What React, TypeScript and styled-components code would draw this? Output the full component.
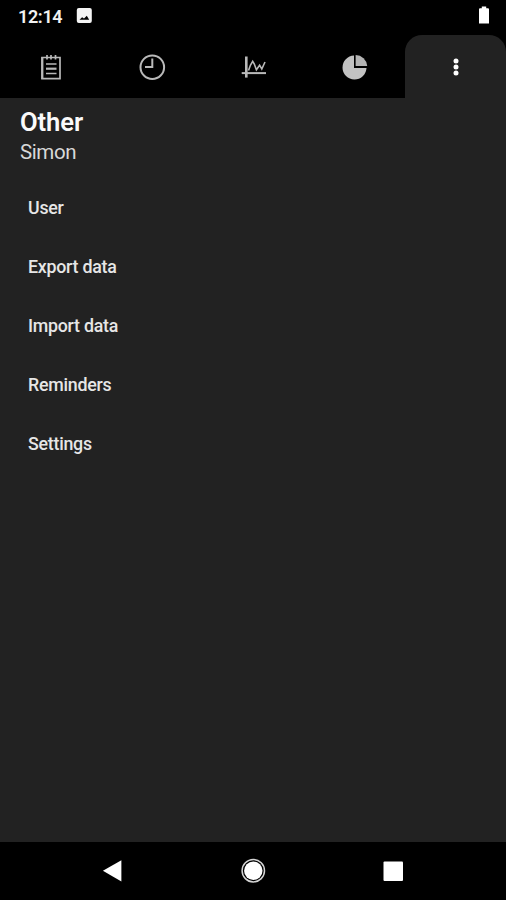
import React from "react";
import styled, { createGlobalStyle } from "styled-components";

const GlobalStyle = createGlobalStyle`
  * { box-sizing: border-box; }
  body { margin: 0; background: #000; }
`;

const Screen = styled.div`
  display: flex;
  flex-direction: column;
  width: 506px;
  height: 900px;
  overflow: hidden;
  background: #000;
  color: #fff;
  font-family: Roboto, sans-serif;
`;

const StatusBar = styled.header`
  display: flex;
  align-items: flex-start;
  height: 35px;
  padding: 6px 14px 0 18px;
`;

const Clock = styled.span`
  width: 58px;
  font-size: 18px;
  font-weight: 600;
  letter-spacing: -0.35px;
  line-height: 21px;
  color: #f2f2f2;
`;

const StatusIcon = styled.svg<{ $end?: boolean }>`
  display: block;
  flex: none;
  margin-left: ${(p) => (p.$end ? "auto" : "0")};
`;

const TabBar = styled.nav`
  display: grid;
  grid-template-columns: 101px 101px 102px 101px 101px;
  height: 63px;
`;

const Tab = styled.button<{ $active?: boolean }>`
  padding: 16px 0 14px 34px;
  border: 0;
  border-radius: 17px 17px 0 0;
  background: ${(p) => (p.$active ? "#222" : "#000")};
  color: ${(p) => (p.$active ? "#fff" : "#b9b9b9")};
  text-align: left;
`;

const TabIcon = styled.svg`
  display: block;
  width: 33px;
  height: 33px;
`;

const Content = styled.main`
  flex: 1;
  padding: 8px 20px 0;
  background: #222;
`;

const Title = styled.h1`
  margin: 0;
  font-size: 25.6px;
  font-weight: 600;
  letter-spacing: -0.1px;
  line-height: 32px;
  color: #fafafa;
`;

const UserName = styled.p`
  margin: 0;
  font-size: 20.5px;
  letter-spacing: -0.4px;
  line-height: 28px;
  color: #d8d8d8;
`;

const Menu = styled.ul`
  margin: 12px 0 0;
  padding: 0;
  list-style: none;
`;

const MenuItem = styled.li`
  display: flex;
  align-items: center;
  height: 59px;
  padding-left: 8px;
  font-size: 17.8px;
  font-weight: 500;
  letter-spacing: -0.25px;
  color: #e6e6e6;
`;

const NavBar = styled.footer`
  display: grid;
  grid-template-columns: 183px 140px 140px;
  justify-items: center;
  height: 58px;
  padding-top: 12px;
`;

const NavButton = styled.button<{ $first?: boolean }>`
  width: 34px;
  height: 34px;
  margin-left: ${(p) => (p.$first ? "42px" : "0")};
  padding: 0;
  border: 0;
  background: none;
  color: #fff;

  svg { display: block; }
`;

const items = ["User", "Export data", "Import data", "Reminders", "Settings"];

export default function App() {
  return (
    <Screen>
      <GlobalStyle />
      <StatusBar>
        <Clock>12:14</Clock>
        <StatusIcon width="18" height="20" viewBox="0 0 18 20">
          <rect x="0.8" y="2" width="15" height="15" rx="2" fill="#f4f4f4" />
          <path d="M3.5 13.8 6.1 11.2 8 12.6 10.8 9.8 13.2 13.8Z" fill="#000" />
        </StatusIcon>
        <StatusIcon $end width="14" height="20" viewBox="0 0 14 20">
          <path d="M1 3.2Q1 2.2 2 2.2H3.8V.6H8.2V2.2H10Q11 2.2 11 3.2V17.6H1Z" fill="#fff" />
        </StatusIcon>
      </StatusBar>
      <TabBar>
        <Tab aria-label="Log">
          <TabIcon viewBox="0 0 33 33" fill="none" stroke="currentColor">
            <path d="M8 6.5H26V27.6H8Z" strokeWidth="1.7" />
            <path d="M8.4 6V28" strokeWidth="2" />
            <path d="M13 4V8.5M17 4V8.5M21.5 4V8.5" strokeWidth="1.7" />
            <path d="M12 13H22.5M12 22.5H22.5" strokeWidth="1.4" />
            <path d="M12 17.7H22.5" strokeWidth="2.2" />
          </TabIcon>
        </Tab>
        <Tab aria-label="History">
          <TabIcon viewBox="0 0 33 33" fill="none" stroke="currentColor">
            <circle cx="17.3" cy="16.2" r="11.8" strokeWidth="2" />
            <path d="M17.3 7.5V15.9H10" strokeWidth="2" />
          </TabIcon>
        </Tab>
        <Tab aria-label="Chart">
          <TabIcon viewBox="0 0 33 33" fill="none" stroke="currentColor">
            <path d="M10.3 5.5V26.6" strokeWidth="2.6" />
            <path d="M5.7 22.1H30" strokeWidth="2" />
            <path d="M12.5 19.5 14.5 14 16.7 10.3 18.3 13 20.4 18.8 23.6 14.2 25.8 18 29 11" strokeWidth="1.6" />
          </TabIcon>
        </Tab>
        <Tab aria-label="Statistics">
          <TabIcon viewBox="0 0 33 33">
            <path d="M16 4.5A12 12 0 1 0 28.5 17H16Z" fill="#c2c2c2" />
            <path d="M17.6 4A11.7 11.7 0 0 1 29.2 14.9H17.6Z" fill="#b4b4b4" />
          </TabIcon>
        </Tab>
        <Tab $active aria-label="Other">
          <TabIcon viewBox="0 0 33 33" fill="currentColor">
            <circle cx="17" cy="10" r="2.5" />
            <circle cx="17" cy="16" r="2.5" />
            <circle cx="17" cy="22" r="2.5" />
          </TabIcon>
        </Tab>
      </TabBar>
      <Content>
        <Title>Other</Title>
        <UserName>Simon</UserName>
        <Menu>
          {items.map((item) => (
            <MenuItem key={item}>{item}</MenuItem>
          ))}
        </Menu>
      </Content>
      <NavBar>
        <NavButton $first aria-label="Back">
          <svg width="34" height="34" viewBox="0 0 34 34">
            <path d="M6.9 16.7 25.4 6.2V27.4Z" fill="currentColor" />
          </svg>
        </NavButton>
        <NavButton aria-label="Home">
          <svg width="34" height="34" viewBox="0 0 34 34">
            <circle cx="17.3" cy="16.7" r="11.2" fill="none" stroke="#d5d5d5" strokeWidth="1.5" />
            <circle cx="17.3" cy="16.7" r="9.2" fill="currentColor" />
          </svg>
        </NavButton>
        <NavButton aria-label="Recent apps">
          <svg width="34" height="34" viewBox="0 0 34 34">
            <rect x="7.5" y="7.4" width="19.5" height="19.5" rx="1" fill="currentColor" />
          </svg>
        </NavButton>
      </NavBar>
    </Screen>
  );
}
